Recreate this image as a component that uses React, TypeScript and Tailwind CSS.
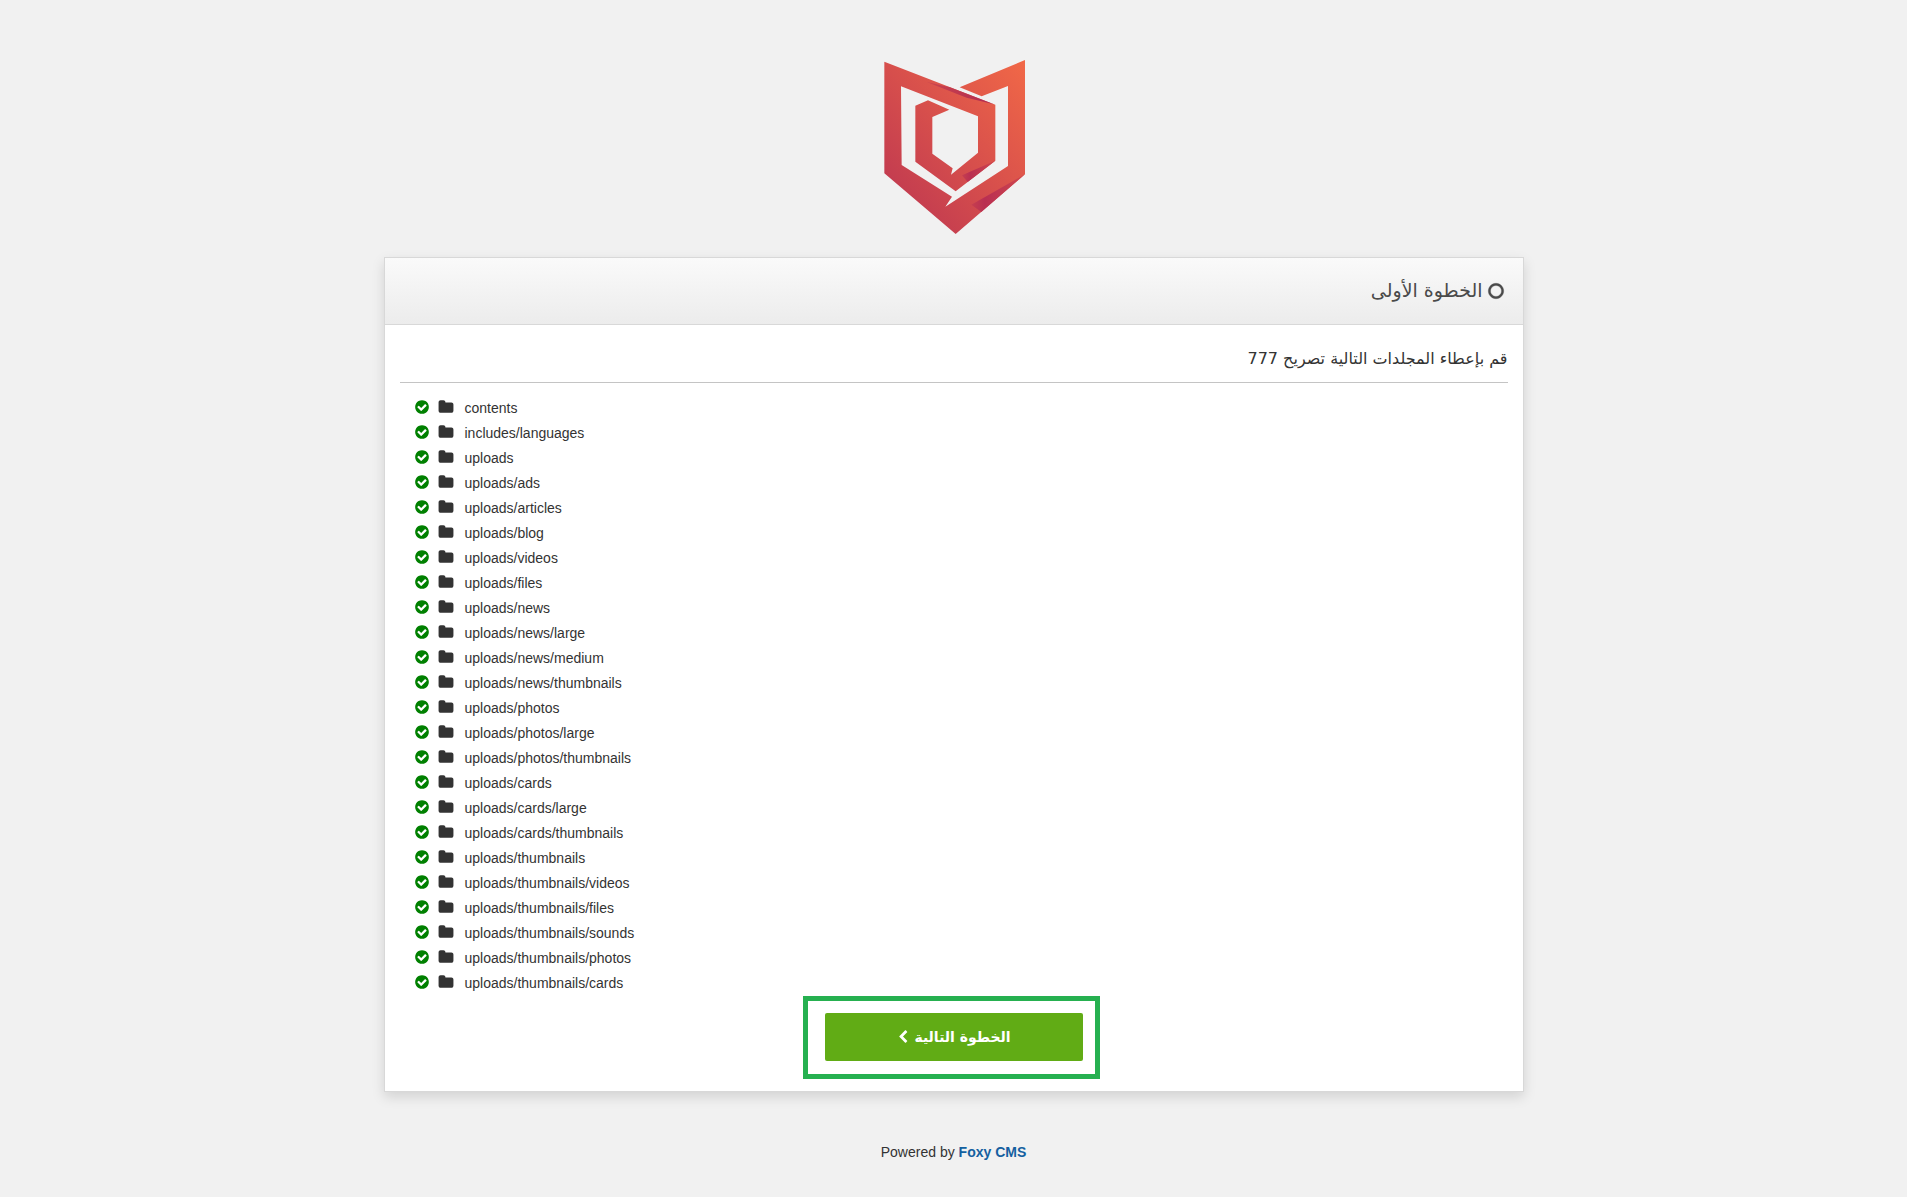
import React from 'react';

const folders = [
  'contents',
  'includes/languages',
  'uploads',
  'uploads/ads',
  'uploads/articles',
  'uploads/blog',
  'uploads/videos',
  'uploads/files',
  'uploads/news',
  'uploads/news/large',
  'uploads/news/medium',
  'uploads/news/thumbnails',
  'uploads/photos',
  'uploads/photos/large',
  'uploads/photos/thumbnails',
  'uploads/cards',
  'uploads/cards/large',
  'uploads/cards/thumbnails',
  'uploads/thumbnails',
  'uploads/thumbnails/videos',
  'uploads/thumbnails/files',
  'uploads/thumbnails/sounds',
  'uploads/thumbnails/photos',
  'uploads/thumbnails/cards',
];

const icons = {
  circle:
    'M896 352q-148 0-273 73t-198 198-73 273 73 273 198 198 273 73 273-73 198-198 73-273-73-273-198-198-273-73zm768 544q0 209-103 385.5t-279.5 279.5-385.5 103-385.5-103-279.5-279.5-103-385.5 103-385.5 279.5-279.5 385.5-103 385.5 103 279.5 279.5 103 385.5z',
  check:
    'M1412 734q0-28-18-46l-91-90q-19-19-45-19t-45 19l-408 407-226-226q-19-19-45-19t-45 19l-91 90q-18 18-18 46 0 27 18 45l362 362q19 19 45 19 27 0 46-19l543-543q18-18 18-45zm252 162q0 209-103 385.5t-279.5 279.5-385.5 103-385.5-103-279.5-279.5-103-385.5 103-385.5 279.5-279.5 385.5-103 385.5 103 279.5 279.5 103 385.5z',
  folder:
    'M1728 608v704q0 92-66 158t-158 66h-1216q-92 0-158-66t-66-158v-960q0-92 66-158t158-66h320q92 0 158 66t66 158v32h672q92 0 158 66t66 158z',
  chevron:
    'M1427 301l-531 531 531 531q19 19 19 45t-19 45l-166 166q-19 19-45 19t-45-19l-742-742q-19-19-19-45t19-45l742-742q19-19 45-19t45 19l166 166q19 19 19 45t-19 45z',
};

type IconProps = {
  name: keyof typeof icons;
  className?: string;
};

const Icon = ({ name, className }: IconProps) => (
  <svg viewBox="0 0 1792 1792" fill="currentColor" className={className} aria-hidden="true">
    <path d={icons[name]} />
  </svg>
);

const Logo = () => (
  <svg viewBox="39 30 426 522" className="h-[174px] w-[142px]" role="img" aria-label="Foxy CMS">
    <defs>
      <linearGradient id="fox" x1="1" y1="0" x2="0.15" y2="0.9">
        <stop offset="0" stopColor="#f16847" />
        <stop offset="0.45" stopColor="#dc544b" />
        <stop offset="1" stopColor="#c13a50" />
      </linearGradient>
      <linearGradient id="fold" x1="0" y1="0" x2="1" y2="0">
        <stop offset="0" stopColor="#cb454d" />
        <stop offset="1" stopColor="#b02a52" />
      </linearGradient>
      <linearGradient id="foldUp" x1="1" y1="0" x2="0" y2="0">
        <stop offset="0" stopColor="#cf474d" />
        <stop offset="0.75" stopColor="#b92f52" />
        <stop offset="1" stopColor="#c63f4f" />
      </linearGradient>
    </defs>
    <path
      fill="url(#fox)"
      d="M43 35 376 164V332L257 424 136 335V167L174 151 238 179 187 201V311L248 355 243 374 324 308V199L93 109 95 345 246 440 226 470 414 348V108L335 139 269 112 465 30V373L257 552 43 370Z"
    />
    <path fill="url(#fold)" d="M170 96 240 112 372 163 290 143Z" />
    <path fill="url(#foldUp)" d="M276 376 376 332 293 396Z" />
    <path fill="url(#foldUp)" d="M304 464 465 373 334 486Z" />
  </svg>
);

const App = () => {
  return (
    <div
      dir="rtl"
      className="flex min-h-screen flex-col items-center bg-[#f1f1f1] px-4 pt-[60px] font-['Liberation_Sans','DejaVu_Sans',sans-serif] text-sm text-[#333]"
    >
      <Logo />

      <main className="mt-[23px] w-full max-w-[1140px] border border-[#d8d8d8] bg-white shadow-[0_5px_12px_rgba(0,0,0,0.13)]">
        <header className="flex h-[67px] items-center gap-1 border-b border-[#d8d8d8] bg-linear-to-b from-[#fafafa] to-[#ececec] px-[18px] text-[#4a4a4a]">
          <Icon name="circle" className="size-[18px] stroke-current stroke-[30]" />
          <h1 className="font-['DejaVu_Sans',sans-serif] text-[19px]">الخطوة الأولى</h1>
        </header>

        <div className="px-[15px] pb-[30px]">
          <h2 className="flex h-[58px] items-center border-b border-[#c4c4c4] pt-2.5 font-['DejaVu_Sans',sans-serif] text-base">
            قم بإعطاء المجلدات التالية تصريح 777
          </h2>

          <ul dir="ltr" className="mt-3 px-3.5">
            {folders.map((folder) => (
              <li key={folder} className="flex h-[25px] items-center">
                <Icon name="check" className="-mt-px size-4 text-[#008000]" />
                <Icon name="folder" className="-mt-px ml-2 size-4" />
                <span className="ml-[11px]">{folder}</span>
              </li>
            ))}
          </ul>

          <div className="mt-[18px] flex justify-center">
            <div className="relative">
              <button
                type="button"
                className="flex h-12 w-[258px] items-center justify-center gap-1 rounded-xs bg-[#61ac15] font-['DejaVu_Sans',sans-serif] text-sm font-bold text-white"
              >
                الخطوة التالية
                <Icon name="chevron" className="size-3.5" />
              </button>
              <div className="pointer-events-none absolute -top-[17px] -right-[17px] -bottom-[18px] -left-[22px] border-5 border-[#26b050]" />
            </div>
          </div>
        </div>
      </main>

      <footer dir="ltr" className="mt-[50px]">
        Powered by{' '}
        <a href="#" className="font-bold text-[#1460a0]">
          Foxy CMS
        </a>
      </footer>
    </div>
  );
};

export default App;
